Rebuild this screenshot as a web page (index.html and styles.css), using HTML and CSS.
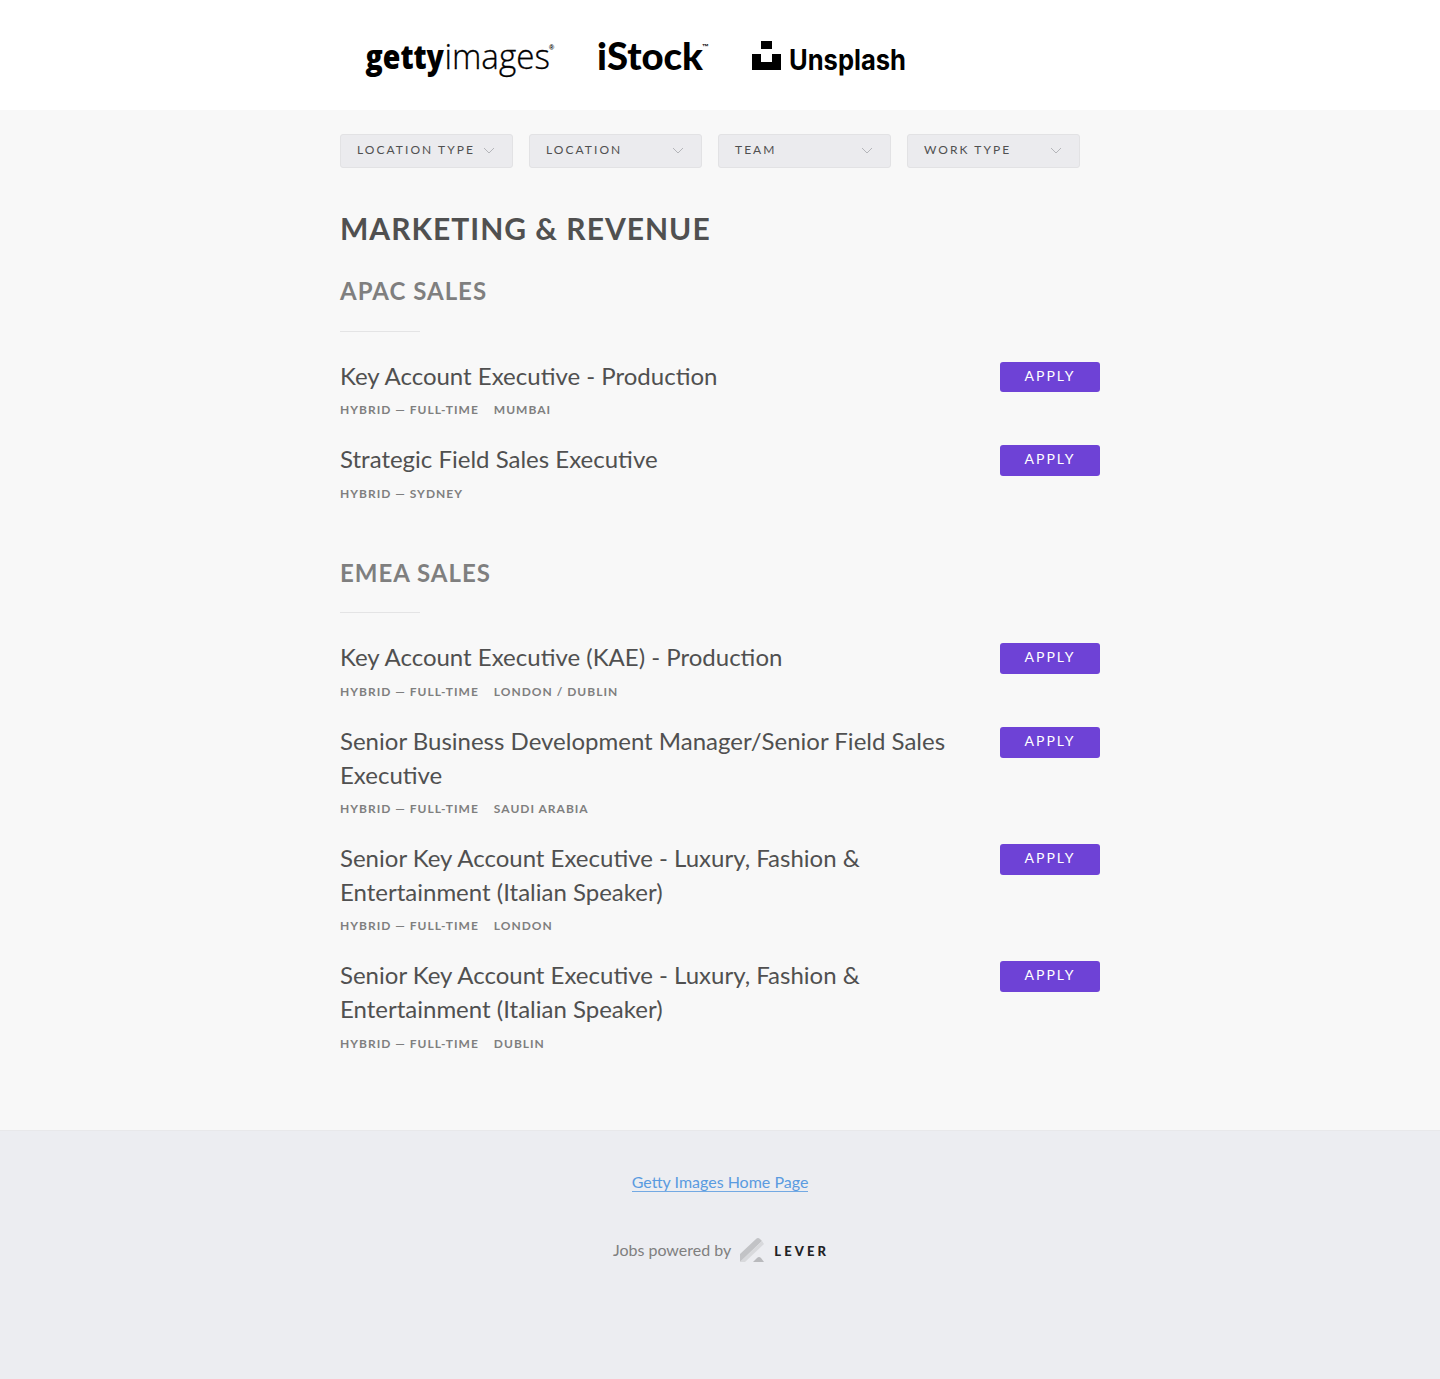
FILE: index.html
```html
<!DOCTYPE html>
<html lang="en">
<head>
	<meta charset="UTF-8">
	<meta name="viewport" content="width=device-width, initial-scale=1.0">
	<title>Getty Images</title>
	<link rel="stylesheet" href="styles.css">
</head>
<body>
	<header class="main-header">
		<svg class="logo" width="600" height="110" viewBox="0 0 600 110" role="img" aria-label="Getty Images, iStock, Unsplash">
			<text y="69"><tspan class="logo-getty" x="25.5" textLength="78.5" lengthAdjust="spacingAndGlyphs">getty</tspan><tspan class="logo-images" x="104.5" textLength="105.5" lengthAdjust="spacingAndGlyphs">images</tspan><tspan class="logo-mark" x="209" y="50">®</tspan></text>
			<text class="logo-istock" x="257" y="70" textLength="106" lengthAdjust="spacingAndGlyphs">iStock</text>
			<text class="logo-mark" x="362" y="49">™</text>
			<path d="M421 41h11v8h-11zM412 54h9v8h11v-8h9v16h-29z"/>
			<text class="logo-unsplash" x="449" y="70" textLength="117" lengthAdjust="spacingAndGlyphs">Unsplash</text>
		</svg>
	</header>

	<main class="content">
		<div class="filter-bar">
			<div class="filter">Location type <svg class="caret" width="12" height="8" viewBox="0 0 12 8"><path d="M1 1l5 5 5-5"/></svg></div>
			<div class="filter">Location <svg class="caret" width="12" height="8" viewBox="0 0 12 8"><path d="M1 1l5 5 5-5"/></svg></div>
			<div class="filter">Team <svg class="caret" width="12" height="8" viewBox="0 0 12 8"><path d="M1 1l5 5 5-5"/></svg></div>
			<div class="filter">Work type <svg class="caret" width="12" height="8" viewBox="0 0 12 8"><path d="M1 1l5 5 5-5"/></svg></div>
		</div>

		<h2 class="department">Marketing &amp; Revenue</h2>

		<section class="group">
			<h3 class="group-title">APAC Sales</h3>
			<div class="posting">
				<div class="posting-info">
					<h5>Key Account Executive - Production</h5>
					<p class="tags"><span>Hybrid — Full-time</span><span>Mumbai</span></p>
				</div>
				<a class="apply" href="#">Apply</a>
			</div>
			<div class="posting">
				<div class="posting-info">
					<h5>Strategic Field Sales Executive</h5>
					<p class="tags"><span>Hybrid — Sydney</span></p>
				</div>
				<a class="apply" href="#">Apply</a>
			</div>
		</section>

		<section class="group">
			<h3 class="group-title">EMEA Sales</h3>
			<div class="posting">
				<div class="posting-info">
					<h5>Key Account Executive (KAE) - Production</h5>
					<p class="tags"><span>Hybrid — Full-time</span><span>London / Dublin</span></p>
				</div>
				<a class="apply" href="#">Apply</a>
			</div>
			<div class="posting">
				<div class="posting-info">
					<h5>Senior Business Development Manager/Senior Field Sales Executive</h5>
					<p class="tags"><span>Hybrid — Full-time</span><span>Saudi Arabia</span></p>
				</div>
				<a class="apply" href="#">Apply</a>
			</div>
			<div class="posting">
				<div class="posting-info">
					<h5>Senior Key Account Executive - Luxury, Fashion &amp; Entertainment (Italian Speaker)</h5>
					<p class="tags"><span>Hybrid — Full-time</span><span>London</span></p>
				</div>
				<a class="apply" href="#">Apply</a>
			</div>
			<div class="posting">
				<div class="posting-info">
					<h5>Senior Key Account Executive - Luxury, Fashion &amp; Entertainment (Italian Speaker)</h5>
					<p class="tags"><span>Hybrid — Full-time</span><span>Dublin</span></p>
				</div>
				<a class="apply" href="#">Apply</a>
			</div>
		</section>
	</main>

	<footer class="main-footer">
		<a class="home-link" href="#">Getty Images Home Page</a>
		<div class="powered">
			<span>Jobs powered by</span>
			<svg class="lever-icon" width="26" height="26" viewBox="0 0 26 26">
				<path fill="#c2c3c6" d="M1 17L17 2q2-2 4 0l2 2L1 25z"/>
				<path fill="#d8d9dc" d="M23 4l2 3L6 25H1z"/>
				<path fill="#b9babd" d="M14 25l4-4q2-2 4 0l3 4z"/>
			</svg>
			<span class="lever">LEVER</span>
		</div>
	</footer>
</body>
</html>
```
FILE: styles.css
```css
* {
	box-sizing: border-box;
	margin: 0;
	padding: 0;
}
body {
	background: #f8f8f8;
	color: #505050;
	font-family: Lato, sans-serif;
}
.main-header {
	height: 110px;
	background: #fff;
}
.logo {
	display: block;
	width: 600px;
	margin-left: 340px;
}
.logo-getty {
	font: 800 33px "Open Sans", sans-serif;
}
.logo-images {
	font: 300 34px "Open Sans", sans-serif;
	stroke: #000;
	stroke-width: 0.3px;
}
.logo-istock {
	font: 900 38px Lato, sans-serif;
}
.logo-unsplash {
	font: 700 28px Inter, sans-serif;
}
.logo-mark {
	font: 700 7px "Liberation Sans", sans-serif;
}
.content {
	width: 760px;
	height: 1020px;
	margin: 0 auto;
	padding-top: 24px;
}
.filter-bar {
	display: flex;
	gap: 16px;
}
.filter {
	display: flex;
	justify-content: space-between;
	align-items: center;
	width: 173px;
	height: 34px;
	padding: 0 17px 3px 16px;
	border: 1px solid #e2e2e4;
	border-radius: 3px;
	background: #ebebee;
	font-size: 12px;
	letter-spacing: 2.05px;
	text-transform: uppercase;
	white-space: nowrap;
}
.caret {
	margin-top: 3px;
	fill: none;
	stroke: #b4b5b9;
}
.department {
	margin-top: 38px;
	font-size: 30px;
	line-height: 44px;
	letter-spacing: 1px;
	text-transform: uppercase;
}
.group {
	margin-bottom: 30.2px;
}
.department + .group {
	margin-top: 24.2px;
}
.group-title {
	color: #7f7f7f;
	font-size: 24px;
	line-height: 34px;
	letter-spacing: 1px;
	text-transform: uppercase;
	margin-bottom: 27px;
}
.group-title::after {
	content: "";
	display: block;
	width: 80px;
	height: 1px;
	margin-top: 22.4px;
	background: #e4e4e5;
}
.posting {
	display: flex;
	justify-content: space-between;
	align-items: flex-start;
	padding-bottom: 24px;
}
.posting-info {
	width: 620px;
}
.posting h5 {
	font-size: 24px;
	font-weight: 400;
	line-height: 33.6px;
}
.tags {
	display: flex;
	gap: 15px;
	margin-top: 9px;
	color: #7f7f7f;
	font-size: 12px;
	font-weight: 700;
	line-height: 17px;
	letter-spacing: 1px;
	text-transform: uppercase;
}
.apply {
	width: 100px;
	height: 30.6px;
	margin-top: 3px;
	border-radius: 3px;
	background: #6e42d6;
	color: #fff;
	font-size: 14px;
	line-height: 28px;
	letter-spacing: 2px;
	text-align: center;
	text-decoration: none;
	text-transform: uppercase;
}
.main-footer {
	display: flex;
	flex-direction: column;
	align-items: center;
	height: 249px;
	padding-top: 41px;
	border-top: 1px solid #e8e8ea;
	background: #ecedf1;
	font-size: 16px;
}
.home-link {
	border-bottom: 1px solid #73a9e3;
	color: #5a9be0;
	line-height: 19px;
	text-decoration: none;
}
.powered {
	display: flex;
	align-items: center;
	margin-top: 45px;
	margin-left: 2px;
	color: #7f7f7f;
	line-height: 20px;
}
.powered span:first-child {
	margin-bottom: 1px;
}
.lever-icon {
	margin: 0 9px 0 8px;
}
.lever {
	margin-top: 2px;
	color: #202124;
	font-size: 13px;
	font-weight: 900;
	letter-spacing: 3.1px;
}
```
